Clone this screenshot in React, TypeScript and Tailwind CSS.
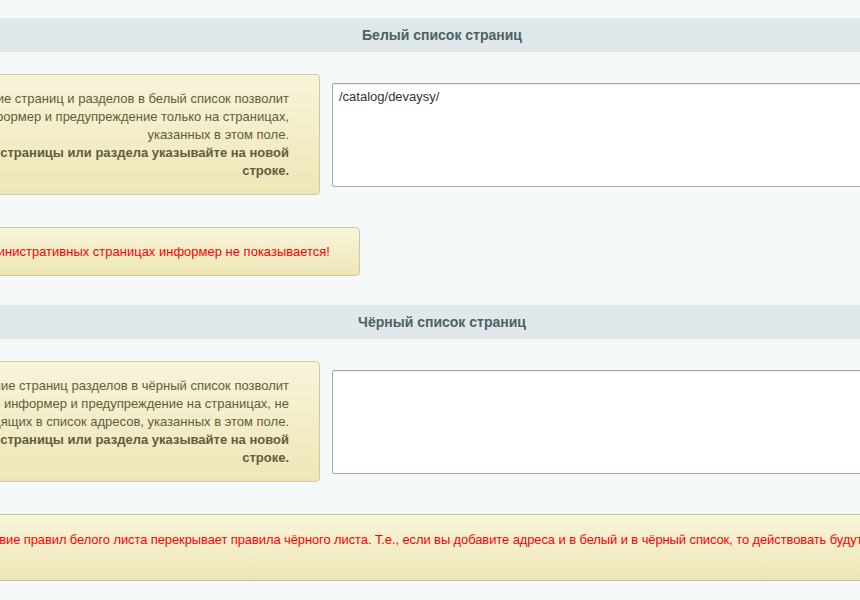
import React from "react";

const font = { fontFamily: '"Liberation Sans", Arial, sans-serif' };

function SectionHeader({ title }: { title: string }) {
  return (
    <div className="h-[34px] bg-[#e0e8ea] flex items-center justify-center text-[14px] font-bold text-[#4b6267]">
      {title}
    </div>
  );
}

function HintBox({ lines, bold }: { lines: string[]; bold: string[] }) {
  return (
    <div className="w-[520px] rounded-[4px] border border-[#d6c894] bg-gradient-to-b from-[#f7f5da] to-[#efe6b7] pt-[15px] pb-[14px] pr-[30px] text-right text-[13px] leading-[18px] text-[#625c3e] whitespace-nowrap">
      {lines.map((l, i) => (
        <div key={i}>{l}</div>
      ))}
      {bold.map((l, i) => (
        <div key={"b" + i} className="font-bold">
          {l}
        </div>
      ))}
    </div>
  );
}

function ListRow({
  lines,
  bold,
  value,
}: {
  lines: string[];
  bold: string[];
  value: string;
}) {
  return (
    <div className="flex items-center">
      <div className="w-[626px] flex justify-end pr-[6px]">
        <HintBox lines={lines} bold={bold} />
      </div>
      <div className="pl-[6px]">
        <textarea
          readOnly
          value={value}
          className="block w-[700px] h-[104px] resize-none rounded-[2px] border border-[#9ea8b1] bg-white px-[6px] py-[5px] text-[13px] leading-[16px] text-[#333] outline-none shadow-[inset_0_1px_1px_rgba(0,0,0,0.08)]"
          style={font}
        />
      </div>
    </div>
  );
}

function RedNote({ text, width }: { text: string; width: string }) {
  return (
    <div className="flex">
      <div
        className={`${width} rounded-[4px] border border-[#d6c894] bg-gradient-to-b from-[#f7f5da] to-[#efe6b7] py-[14px] pr-[29px] text-right text-[13px] leading-[19px] text-[#ff0000] whitespace-nowrap`}
      >
        {text}
      </div>
    </div>
  );
}

export default function App() {
  return (
    <div className="w-[860px] h-[600px] overflow-hidden bg-[#f5f9f9]" style={font}>
      <div className="ml-[-300px] w-[1484px] pt-[18px]">
        <SectionHeader title="Белый список страниц" />
        <div className="mt-[22px]">
          <ListRow
            lines={[
              "Добавление страниц и разделов в белый список позволит",
              "показывать информер и предупреждение только на страницах,",
              "указанных в этом поле.",
            ]}
            bold={["Адрес каждой страницы или раздела указывайте на новой", "строке."]}
            value="/catalog/devaysy/"
          />
        </div>
        <div className="mt-[32px]">
          <RedNote
            width="w-[660px]"
            text="На административных страницах информер не показывается!"
          />
        </div>
        <div className="mt-[29px]">
          <SectionHeader title="Чёрный список страниц" />
        </div>
        <div className="mt-[22px]">
          <ListRow
            lines={[
              "Добавление страниц разделов в чёрный список позволит",
              "показывать информер и предупреждение на страницах, не",
              "входящих в список адресов, указанных в этом поле.",
            ]}
            bold={["Адрес каждой страницы или раздела указывайте на новой", "строке."]}
            value=""
          />
        </div>
        <div className="mt-[32px] border-y border-[#cfbf8c] bg-gradient-to-b from-[#f7f5da] to-[#efe6b7] pt-[16px] pb-[31px] pl-[300px] text-[13px] leading-[18px] tracking-[-0.11px] text-[#ff0000] whitespace-nowrap">
          <span className="ml-[-36px]">
            Действие правил белого листа перекрывает правила чёрного листа. Т.е., если вы добавите адреса и в белый и в чёрный список, то действовать будут только правила белого списка.
          </span>
        </div>
      </div>
    </div>
  );
}
